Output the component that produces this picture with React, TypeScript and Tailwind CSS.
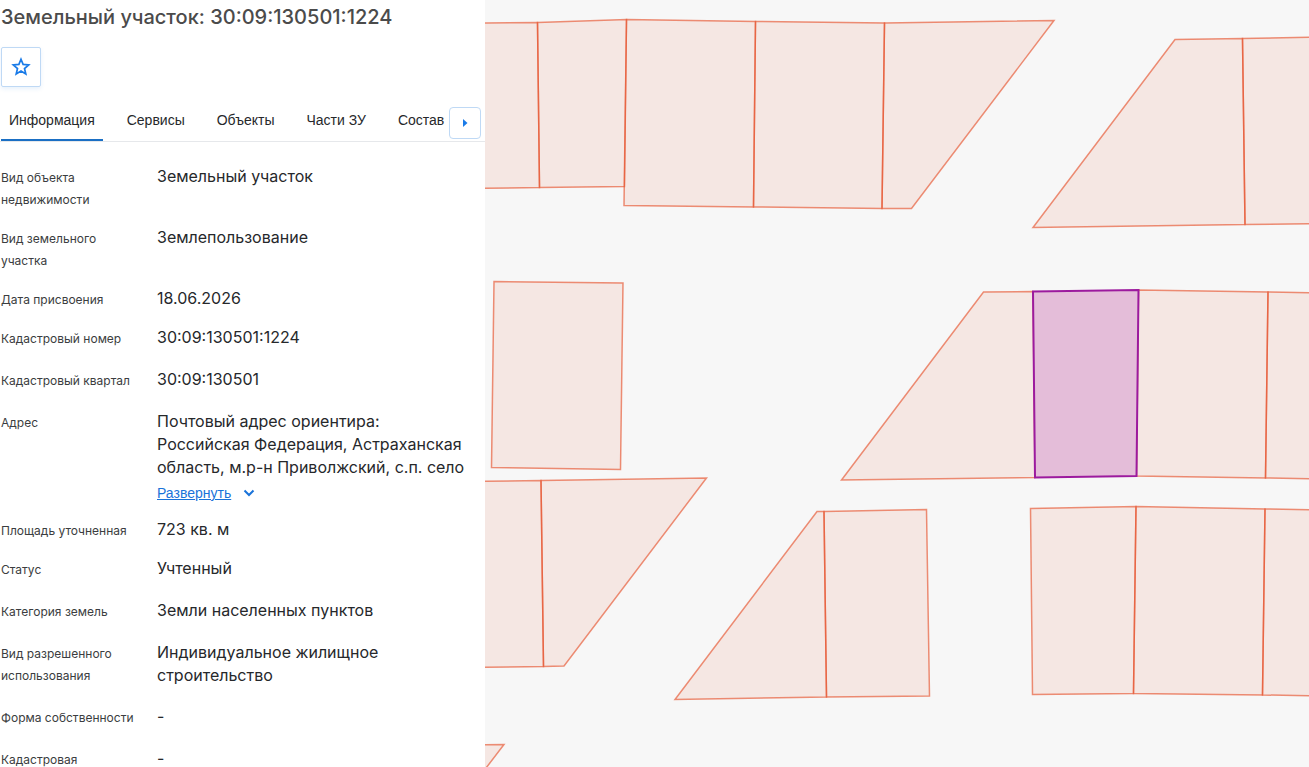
import React, { useState } from 'react';
import clsx from 'clsx';

const tabs = ['Информация', 'Сервисы', 'Объекты', 'Части ЗУ', 'Состав'];

type Field = {
  label: string;
  value: string;
  spacious?: boolean;
  expandable?: boolean;
};

const fields: Field[] = [
  { label: 'Вид объекта недвижимости', value: 'Земельный участок' },
  { label: 'Вид земельного участка', value: 'Землепользование' },
  { label: 'Дата присвоения', value: '18.06.2026' },
  { label: 'Кадастровый номер', value: '30:09:130501:1224', spacious: true },
  { label: 'Кадастровый квартал', value: '30:09:130501', spacious: true },
  {
    label: 'Адрес',
    value: 'Почтовый адрес ориентира: Российская Федерация, Астраханская область, м.р-н Приволжский, с.п. село',
    expandable: true
  },
  { label: 'Площадь уточненная', value: '723 кв. м' },
  { label: 'Статус', value: 'Учтенный', spacious: true },
  { label: 'Категория земель', value: 'Земли населенных пунктов', spacious: true },
  { label: 'Вид разрешенного использования', value: 'Индивидуальное жилищное строительство', spacious: true },
  { label: 'Форма собственности', value: '-', spacious: true },
  { label: 'Кадастровая', value: '-' }
];

const parcels = [
  '470,23 537.5,22.5 539.5,187.5 470,188.5',
  '537.5,22.5 626.5,19.5 624.5,186.5 539.5,187.5',
  '626.5,19.5 755.5,21.5 753.5,207 624,205.5',
  '755.5,21.5 884.5,23 882,208.5 753.5,207',
  '884.5,23 1054,20.5 911.5,208.5 882,208.5',
  '1175,39.5 1242.5,38.5 1245,224.5 1033,227.5',
  '1242.5,38.5 1330,37 1330,223.5 1245,224.5',
  '494,281.5 623,283 620.5,469.5 491.5,467.5',
  '983.5,292 1033,291.5 1035,477.5 841.5,480',
  '1138.5,290 1268,292 1265.5,478 1136.5,476',
  '1268,292 1330,293 1330,479 1265.5,478',
  '470,481.5 541,480.5 543.5,666.5 470,667.5',
  '541,480.5 706.5,478 564,666 543.5,666.5',
  '817,511.5 824,511.5 826.5,697 675,699.5',
  '824,511.5 926.5,509.5 929.5,696 826.5,697',
  '1030.5,508.5 1136,506.5 1133.5,693.5 1032.5,694.5',
  '1136,506.5 1265,509 1262.5,695 1133.5,693.5',
  '1265,509 1330,510 1330,696 1262.5,695',
  '470,745 504,744.5 470,789'
];

const FieldRow = ({ field }: { field: Field }) => (
  <div className={clsx('flex', field.spacious ? 'pb-[18px]' : 'pb-[15px]')}>
    <dt className="w-[156px] shrink-0 pt-0.5 pr-5 text-xs leading-[22px] text-[#3b3d40]">
      {field.label}
    </dt>
    <dd className="min-w-0 flex-1 text-base leading-[23px] text-[#26282b]">
      {field.value}
      {field.expandable && (
        <button
          type="button"
          className="mt-1 flex h-5 items-center gap-3 font-['Liberation_Sans',sans-serif] text-sm text-[#1a73d9]"
        >
          <span className="underline">Развернуть</span>
          <svg viewBox="0 0 12 12" className="h-3 w-3" fill="none" stroke="currentColor" strokeWidth="2" aria-hidden="true">
            <path d="M1.5 3.5 6 8l4.5-4.5" />
          </svg>
        </button>
      )}
    </dd>
  </div>
);

const ParcelMap = () => (
  <svg
    viewBox="485 0 824 767"
    preserveAspectRatio="xMinYMin slice"
    className="h-full w-full"
    role="img"
    aria-label="Карта участков"
  >
    <g fill="#ee5020" fillOpacity="0.09" stroke="#e65530" strokeOpacity="0.65" strokeWidth="1.5">
      {parcels.map((points) => (
        <polygon key={points} points={points} />
      ))}
    </g>
    <polygon
      points="1033,291.5 1138.5,290 1136.5,476 1035,477.5"
      fill="#e4bdd9"
      stroke="#9c1a9e"
      strokeWidth="2"
    />
  </svg>
);

export default function App() {
  const [active, setActive] = useState(tabs[0]);

  return (
    <div className="flex h-screen overflow-hidden bg-white font-['Inter',sans-serif]">
      <aside className="flex w-[485px] shrink-0 flex-col overflow-hidden">
        <h1 className="pt-1 pl-px text-xl leading-[26px] font-medium text-[#4b4b4b]">
          Земельный участок: 30:09:130501:1224
        </h1>

        <button
          type="button"
          aria-label="Добавить в избранное"
          className="mt-[17px] ml-px flex h-10 w-10 shrink-0 items-center justify-center rounded-xs border border-[#bfd9f5] text-[#1a7be8] shadow-[0_2px_4px_rgba(26,115,217,0.1)]"
        >
          <svg viewBox="0 0 20 20" className="h-5 w-5" fill="none" stroke="currentColor" strokeWidth="1.7" aria-hidden="true">
            <path d="M10 2.3 12.1 7.4 17.7 7.9 13.5 11.5 14.8 17 10 14.1 5.2 17 6.5 11.5 2.3 7.9 7.9 7.4Z" />
          </svg>
        </button>

        <div className="mt-3 flex h-[43px] shrink-0 border-b border-[#e6e8eb] pr-1 pl-px">
          <div role="tablist" className="flex min-w-0 flex-1 gap-4 overflow-hidden font-['Liberation_Sans',sans-serif]">
            {tabs.map((tab) => (
              <button
                key={tab}
                type="button"
                role="tab"
                aria-selected={tab === active}
                onClick={() => setActive(tab)}
                className={clsx(
                  'shrink-0 border-b-2 px-2 pt-0.5 text-sm text-[#26282b]',
                  tab === active ? 'border-[#1a6fc4]' : 'border-transparent'
                )}
              >
                {tab}
              </button>
            ))}
          </div>
          <button
            type="button"
            aria-label="Следующие вкладки"
            className="mt-2 flex h-8 w-8 shrink-0 items-center justify-center rounded-sm border border-[#bfd9f5] bg-white text-[#1a7be8]"
          >
            <svg viewBox="0 0 5 8" className="h-2 w-[5px]" fill="currentColor" aria-hidden="true">
              <path d="M0 0 4.5 4 0 8Z" />
            </svg>
          </button>
        </div>

        <dl className="min-h-0 flex-1 overflow-hidden pt-[23px] pr-4 pl-px">
          {fields.map((field) => (
            <FieldRow key={field.label} field={field} />
          ))}
        </dl>
      </aside>

      <main className="min-w-0 flex-1 bg-[#f7f7f7]">
        <ParcelMap />
      </main>
    </div>
  );
}
